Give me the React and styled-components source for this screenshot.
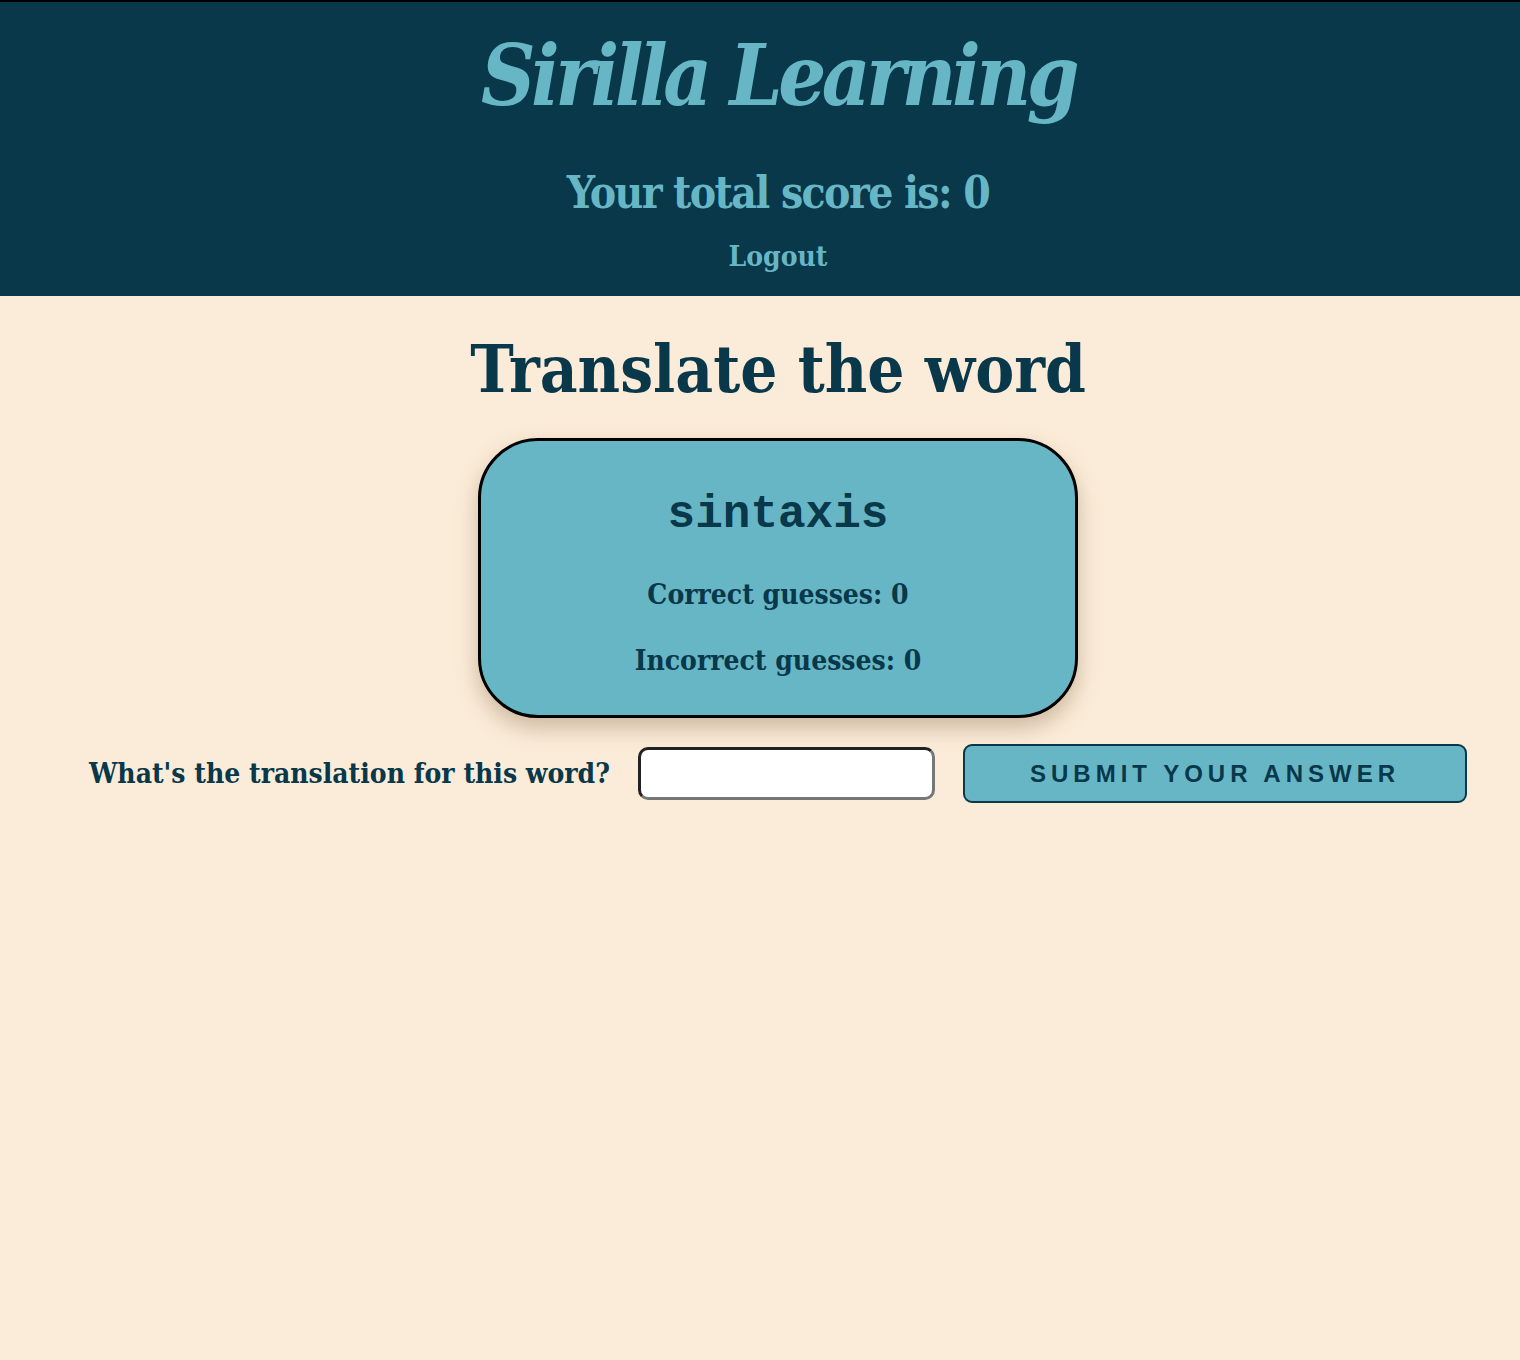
import React from 'react';
import styled, { createGlobalStyle } from 'styled-components';

const GlobalStyle = createGlobalStyle`
  body {
    margin: 0;
    background: #fbecd9;
    font-family: "DejaVu Serif Condensed", "DejaVu Serif", serif;
  }
`;

const Header = styled.header`
  display: flex;
  flex-direction: column;
  align-items: center;
  box-sizing: border-box;
  height: 296px;
  padding-left: 36px;
  background: #08384a;
  border-top: 2px solid #000;
  color: #67b6c5;
`;

const Logo = styled.h1`
  margin: 24px 0 0;
  font-size: 84px;
  font-style: italic;
  font-weight: 700;
  letter-spacing: -4.5px;
  line-height: 1.2;
`;

const Score = styled.h2`
  margin: 40px 0 0;
  font-size: 44px;
  font-weight: 700;
  letter-spacing: -1.6px;
  line-height: 1.2;
`;

const Logout = styled.a`
  margin-top: 20px;
  font-size: 28px;
  font-weight: 700;
  color: #67b6c5;
  cursor: pointer;
`;

const Main = styled.main`
  display: flex;
  flex-direction: column;
  align-items: center;
  padding-left: 36px;
  color: #08384a;
`;

const Heading = styled.h2`
  margin: 34px 0 30px;
  font-size: 65px;
  font-weight: 700;
  line-height: 1.2;
`;

const Card = styled.section`
  display: flex;
  flex-direction: column;
  align-items: center;
  box-sizing: border-box;
  width: 600px;
  height: 280px;
  padding-top: 47px;
  background: #67b6c5;
  border: 3px solid #000;
  border-radius: 60px;
  box-shadow: 0 10px 22px rgba(120, 90, 50, 0.35);
`;

const Word = styled.h3`
  margin: 0 0 35px;
  font-family: "Courier New", "Liberation Mono", monospace;
  font-size: 46px;
  font-weight: 700;
  line-height: 1.2;
`;

const Stat = styled.p`
  margin: 0 0 32px;
  font-size: 28px;
  font-weight: 700;
  line-height: 1.2;
`;

const Form = styled.form`
  display: flex;
  align-items: center;
  justify-content: center;
  align-self: stretch;
  gap: 28px;
  margin-top: 26px;
`;

const Label = styled.label`
  font-size: 28px;
  font-weight: 700;
`;

const Input = styled.input`
  box-sizing: border-box;
  width: 297px;
  height: 53px;
  border: 3px solid;
  border-color: #222 #777 #777 #222;
  border-radius: 10px;
  background: #fff;
`;

const Button = styled.button`
  box-sizing: border-box;
  width: 504px;
  height: 59px;
  background: #67b6c5;
  border: 2px solid #08384a;
  border-radius: 9px;
  color: #08384a;
  font-family: "Liberation Sans", Arial, sans-serif;
  font-size: 24px;
  font-weight: 700;
  letter-spacing: 5px;
  text-transform: uppercase;
`;

export default function App() {
  return (
    <>
      <GlobalStyle />
      <Header>
        <Logo>Sirilla Learning</Logo>
        <Score>Your total score is: 0</Score>
        <Logout>Logout</Logout>
      </Header>
      <Main>
        <Heading>Translate the word</Heading>
        <Card>
          <Word>sintaxis</Word>
          <Stat>Correct guesses: 0</Stat>
          <Stat>Incorrect guesses: 0</Stat>
        </Card>
        <Form onSubmit={(e) => e.preventDefault()}>
          <Label htmlFor="answer">What's the translation for this word?</Label>
          <Input id="answer" type="text" />
          <Button type="submit">Submit your answer</Button>
        </Form>
      </Main>
    </>
  );
}
